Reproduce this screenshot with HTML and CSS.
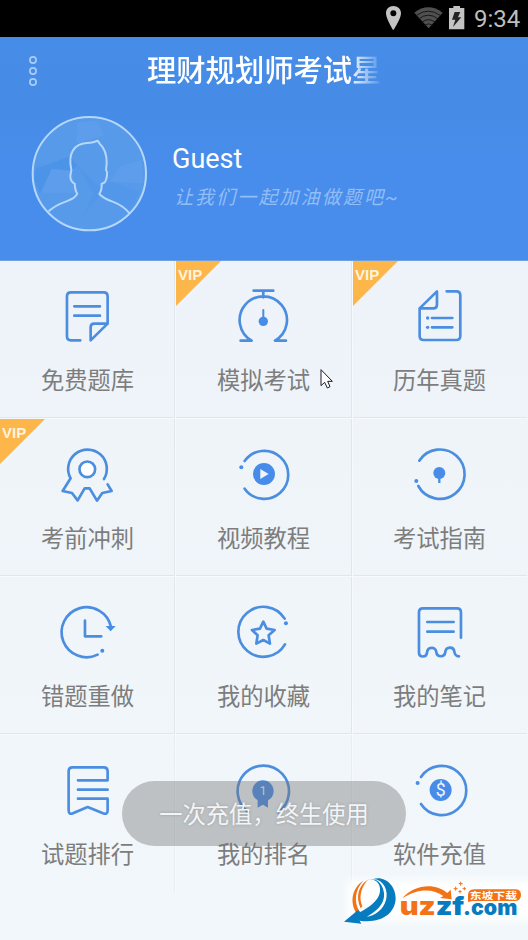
FILE: index.html
```html
<!DOCTYPE html>
<html lang="zh-CN">
<head>
<meta charset="utf-8">
<title>理财规划师考试星</title>
<link rel="stylesheet" href="styles.css">
</head>
<body>
<div class="status">
  <svg class="status-icons" viewBox="1140 0 250 110">
    <path fill="#c3c3c3" fill-rule="evenodd" d="M1168 18c-13 0-22 9-22 22 0 17 22 51 22 51s23-34 23-51c0-13-10-22-23-22zm0 13a9 9 0 1 1 0 18 9 9 0 0 1 0-18z"/>
    <path fill="#505050" d="M1231 38Q1273 5 1316 38L1274 85z"/>
    <g fill="none" stroke="#171717" stroke-width="3"><path d="M1236 47Q1273 20 1310 47M1244 57Q1273 34 1303 57M1254 67Q1273 51 1294 67M1262 76Q1273 67 1286 76"/></g>
    <path fill="#c3c3c3" d="M1335 24h13v-6h20v6h13v64h-46z"/>
    <path fill="#222" d="M1352 36h17l-7 16h10l-25 29 7-22h-10z"/>
  </svg>
  <span class="clock">9:34</span>
</div>
<header class="hero">
  <div class="bar">
    <svg class="menu" viewBox="0 0 10 34"><g fill="none" stroke="#a9cdf8" stroke-width="1.7"><circle cx="5" cy="6" r="3.1"/><circle cx="5" cy="17" r="3.1"/><circle cx="5" cy="28" r="3.1"/></g></svg>
    <h1 class="title">理财规划师考试星</h1>
  </div>
  <div class="profile">
    <svg class="avatar" viewBox="93 45 351 351">
      <circle cx="268" cy="221" r="170" fill="#579aea"/>
      <path fill="#4c94e8" d="M108 205L146 193 210 168 232 198 214 212 155 207 120 280 102 240z"/>
      <path fill="#62a0ec" opacity=".6" d="M232 68L290 62 312 105 230 130zM155 207L214 212 232 280 125 278zM360 198L425 180 430 250 330 245z"/>
      <path fill="#4f96e9" opacity=".6" d="M230 195L300 262 330 245 418 275 390 330 300 285 245 355 280 280z"/>
      <g fill="none" stroke="#b5d7fa" stroke-width="6" stroke-linejoin="round"><circle cx="268" cy="221" r="170"/>
      <path d="M146 334Q165 316 199 304Q226 295 232 281Q226 275 224 251Q211 246 211 228L214 210Q206 170 219 151Q232 131 260 129Q282 128 293 122L299 131Q321 151 320 190L318 210Q323 214 320 232Q317 250 305 251Q306 270 298 282Q310 295 338 305Q372 318 389 341"/></g>
    </svg>
    <div class="who">
      <div class="name">Guest</div>
      <div class="slogan">让我们一起加油做题吧~</div>
    </div>
  </div>
</header>
<main class="grid">
  <div class="cell"><svg class="icon" viewBox="165 66 192 192"><path d="M240 241H212Q200 241 200 229V109Q200 97 212 97H310Q322 97 322 109V191H282Q271 191 271 202V241L322 191M222 139H299M222 167H299"/></svg><span>免费题库</span></div>
  <div class="cell vip"><svg class="icon" viewBox="165 66 192 192"><path d="M232 92H291M261 92V112M193 242H226A71 71 0 1 1 296 242H329"/><path d="M261 150V183" stroke-width="6"/><circle class="fill" cx="261" cy="184" r="14"/></svg><span>模拟考试</span></div>
  <div class="cell vip"><svg class="icon" viewBox="165 66 192 192"><path d="M283 94H312Q324 94 324 106V228Q324 240 312 240H214Q202 240 202 228V145L254 94V134Q254 145 243 145H202M239 174H300M239 202H300"/><circle class="fill" cx="226" cy="174" r="5"/><circle class="fill" cx="226" cy="202" r="5"/></svg><span>历年真题</span></div>

  <div class="cell vip"><svg class="icon" viewBox="165 66 192 192"><path d="M311 183A58 58 0 1 0 211 181L187 219 215 225 232 247 253 211H268L290 248 306 225 334 219 322 199"/><circle cx="261" cy="154" r="23.5" class="white"/></svg><span>考前冲刺</span></div>
  <div class="cell"><svg class="icon" viewBox="165 66 192 192"><path d="M205 129A72 72 0 1 1 205 212"/><circle class="fill" cx="195" cy="148" r="6"/><circle class="fill" cx="263" cy="168" r="33"/><path class="mark" d="M252 153V183L277 168z"/></svg><span>视频教程</span></div>
  <div class="cell"><svg class="icon" viewBox="165 66 192 192"><path d="M201 128A74 74 0 1 1 198 204"/><circle class="fill" cx="192" cy="189" r="6"/><circle class="fill" cx="261" cy="165" r="18"/><path class="butt" d="M261 170V195"/></svg><span>考试指南</span></div>

  <div class="cell"><svg class="icon" viewBox="165 66 192 192"><path d="M292 236A75 75 0 1 1 332 152M254 134V181H303"/><path class="fill" d="M316 150H346L331 166z"/><circle class="fill" cx="306" cy="224" r="6"/></svg><span>错题重做</span></div>
  <div class="cell"><svg class="icon" viewBox="165 66 192 192"><path d="M325 128A75 75 0 1 0 326 205"/><circle class="fill" cx="329" cy="142" r="6"/><path d="M261 137L271 158 295 162 277 178 281 203 261 192 240 203 244 178 227 162 251 158z"/></svg><span>我的收藏</span></div>
  <div class="cell"><svg class="icon" viewBox="165 66 192 192"><path d="M326 185V109Q326 97 314 97H212Q200 97 200 109V230C200 245 222 245 224 231C225 211 250 211 252 228C254 245 277 245 279 228C281 211 304 211 306 226Q308 241 320 241M225 138H304M225 167H304"/></svg><span>我的笔记</span></div>

  <div class="cell"><svg class="icon" viewBox="165 66 192 192"><path d="M233 139H322V112Q322 100 310 100H217Q205 100 205 112V229Q205 243 218 238L262 219 308 238Q322 243 322 229V194H233M233 167H322"/></svg><span>试题排行</span></div>
  <div class="cell"><svg class="icon" viewBox="165 66 192 192"><path d="M217 235A77 77 0 1 1 305 235"/><circle class="fill" cx="260" cy="171" r="32"/><path class="fill" d="M244 195H275V221L260 212 244 221z"/><text x="260" y="184" class="one">1</text></svg><span>我的排名</span></div>
  <div class="cell"><svg class="icon" viewBox="165 66 192 192"><path d="M206 129A74 74 0 1 1 206 210"/><circle class="fill" cx="196" cy="147" r="6"/><circle class="fill" cx="265" cy="168" r="33"/><text x="265" y="187" class="dollar">$</text></svg><span>软件充值</span></div>
</main>
<div class="toast">一次充值，终生使用</div>
<svg class="cursor" viewBox="0 0 39 60"><path d="M3 2V50L14 40 22 57 30 53 23 37H37z" fill="#fff" stroke="#1c1c2c" stroke-width="3"/></svg>
<svg class="logo" viewBox="0 0 564 198">
  <defs><filter id="glow" x="-20%" y="-40%" width="140%" height="180%"><feGaussianBlur stdDeviation="12"/></filter></defs>
  <path d="M20 18H600V140H20z" fill="#fff" filter="url(#glow)"/>
  <path fill="#f47216" d="M70 20C35 42 28 86 51 120L58 112C41 82 45 48 70 20z"/>
  <path fill="#f47216" d="M83 17C55 36 46 68 62 103L67 97C56 70 62 43 83 17z"/>
  <path fill="#077bc0" d="M74 22C105 5 126 30 119 58C113 82 86 101 61 114L54 108L12 143L64 149L59 140C124 149 164 119 167 75C168 36 137 5 101 14C131 18 146 49 138 78C130 108 103 126 80 128C119 107 141 79 129 44C119 15 96 9 74 22z"/>
  <g class="brand">
    <text x="179" y="122" fill="#f47216" textLength="108" lengthAdjust="spacingAndGlyphs">uz</text>
    <text x="287" y="122" fill="#077bc0" textLength="86" lengthAdjust="spacingAndGlyphs">zf</text>
    <text x="369" y="122" class="com" fill="#077bc0" textLength="163" lengthAdjust="spacingAndGlyphs">.com</text>
  </g>
  <path fill="#f47216" d="M187 73C222 31 286 25 322 57L332 47 335 76 300 72 310 66C280 43 232 42 187 73z"/>
  <path d="M384 84V64Q384 46 402 46H526Q543 46 543 63T526 81H397z" fill="#f47216"/>
  <text x="389" y="74" class="brand-cn" textLength="142" lengthAdjust="spacingAndGlyphs">东坡下载</text>
  <path fill="none" stroke="#f47216" stroke-width="3" d="M362 23V35M356 29H368M347 38V50M341 44H353M373 39V49M368 44H378M360 48V58M355 53H365"/>
</svg>
</body>
</html>
```
FILE: styles.css
```css
* { box-sizing: border-box; }
body {
  margin: 0;
  width: 528px;
  height: 940px;
  overflow: hidden;
  position: relative;
  background: linear-gradient(#edf3f8 261px, #f1f7fa);
  font-family: Roboto, "Noto Sans CJK SC", sans-serif;
}
.status {
  height: 37px;
  background: #000;
  display: flex;
  justify-content: flex-end;
  padding-right: 9px;
}
.status-icons { width: 83.33px; height: 36.67px; margin: 0 7px 0 0; }
.clock { color: #bebebe; font-size: 24px; line-height: 38px; width: 45px; white-space: nowrap; }
.hero {
  height: 224px;
  background: linear-gradient(#468de8, #468ce6 30%, #488dec 65%);
  border-bottom: 1px solid #6e9fdf;
}
.bar { height: 68px; display: flex; align-items: center; padding-left: 28px; }
.menu { width: 10px; height: 34px; margin-right: 109px; }
.title {
  margin: 0;
  width: 236px;
  white-space: nowrap;
  font-size: 29.3px;
  line-height: 44px;
  font-weight: 500;
  color: #fff;
  -webkit-mask-image: linear-gradient(90deg, #000 202px, transparent 236px);
  mask-image: linear-gradient(90deg, #000 202px, transparent 236px);
}
.profile { display: flex; padding: 10px 0 0 31px; }
.avatar { width: 117px; height: 117px; }
.who { padding: 28px 0 0 24px; }
.name { color: #fff; font-size: 27px; line-height: 32px; }
.slogan {
  margin-top: 10px;
  padding-left: 2px;
  font-size: 19px;
  line-height: 26px;
  font-weight: 400;
  font-style: italic;
  letter-spacing: 2.1px;
  color: #92bdf6;
  white-space: nowrap;
}
.grid { display: grid; grid-template-columns: 176px 177px 175px; grid-auto-rows: 158px; }
.cell {
  position: relative;
  padding-top: 21px;
  border-right: 1px solid #f6fafc;
  border-bottom: 1px solid #f6fafc;
  box-shadow: inset -1px -1px #e0e6ea;
  display: flex;
  flex-direction: column;
  align-items: center;
}
.cell:nth-child(3n+2) { padding-right: 1px; }
.cell:nth-child(3n) { padding-right: 1px; border-right-color: transparent; box-shadow: inset 0 -1px #e0e6ea; }
.cell:nth-child(n+10) { border-bottom-color: transparent; box-shadow: inset -1px 0 #e8edf1; }
.cell:last-child { box-shadow: none; }
.cell span { margin-top: 17px; font-size: 23.3px; line-height: 36px; color: #7d7d7d; }
.icon {
  width: 64px;
  height: 64px;
  overflow: visible;
  transform: translateX(-.7px);
  fill: none;
  stroke: #4b8ee0;
  stroke-width: 8;
  stroke-linecap: round;
  stroke-linejoin: round;
}
.icon .fill { fill: #468ce8; stroke: none; }
.icon .white { fill: #fff; }
.icon .mark { fill: #eff5f9; stroke: none; }
.icon .butt { stroke-linecap: butt; stroke-width: 7; }
.one, .dollar { fill: #eff5f9; stroke: none; text-anchor: middle; font-family: Roboto, sans-serif; }
.one { font-size: 38px; }
.dollar { font-size: 53px; }
.vip::before {
  content: "";
  position: absolute;
  left: 0;
  top: 0;
  width: 45px;
  height: 45px;
  background: #fcb64a;
  clip-path: polygon(0 0, 100% 0, 0 100%);
}
.vip::after {
  content: "VIP";
  position: absolute;
  left: 2px;
  top: 4px;
  font: 700 15px/19px "Liberation Sans", sans-serif;
  color: #fff4df;
}
.toast {
  position: absolute;
  left: 122px;
  top: 781px;
  width: 284px;
  height: 65px;
  border-radius: 33px;
  background: rgba(115, 115, 115, .4);
  color: #f2f5f7;
  font-size: 23.3px;
  line-height: 68px;
  text-align: center;
  text-shadow: 0 0 3px rgba(90, 90, 90, .35);
  white-space: nowrap;
}
.cursor { position: absolute; left: 319.5px; top: 369px; width: 13px; height: 20px; }
.logo { position: absolute; left: 340px; top: 874px; width: 188px; height: 66px; }
.brand { font: 900 74px Inter, "Open Sans", sans-serif; }
.brand .com { font-size: 62px; }
.brand-cn { font: 700 29px "Noto Sans CJK SC", sans-serif; fill: #fff; }
```
